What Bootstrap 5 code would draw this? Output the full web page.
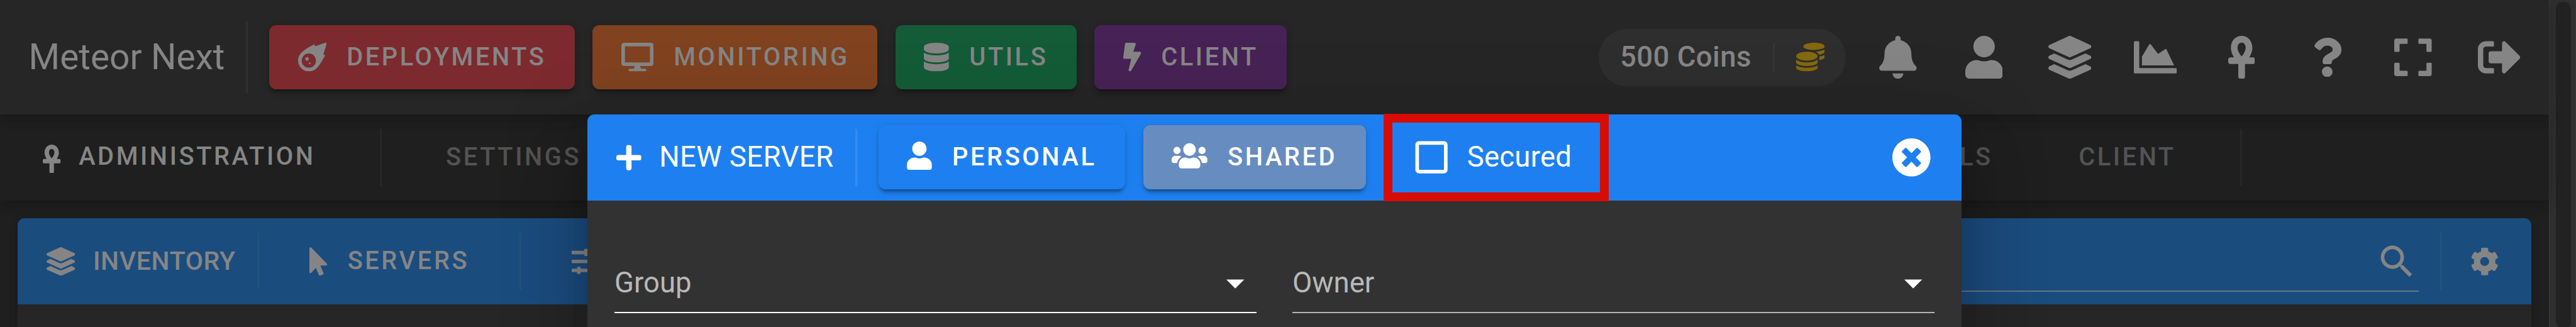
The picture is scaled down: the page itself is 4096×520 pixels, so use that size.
<!DOCTYPE html>
<html lang="en">
<head>
<meta charset="utf-8">
<title>Meteor Next</title>
<link rel="stylesheet" href="https://cdn.jsdelivr.net/npm/bootstrap@5.3.0/dist/css/bootstrap.min.css">
<script src="https://cdn.jsdelivr.net/npm/bootstrap@5.3.0/dist/js/bootstrap.bundle.min.js"></script>
<style>
/* --u is one design pixel on a 1440 wide layout */
:root{--u:calc(100vw / 1440)}
html{font-size:calc(100vw / 90)}
body{font-family:Roboto,"Liberation Sans",sans-serif;background:#1f1f1f;color:#858585;line-height:1.5;overflow:hidden;height:100vh}
.shell{height:100vh;overflow:hidden}
.page{width:calc(var(--u)*1425)}
.ic{fill:currentColor;flex:none;display:block;height:calc(var(--u)*16);width:auto}
.ic24{height:calc(var(--u)*24)}
.ic22{height:calc(var(--u)*22)}
.rule{flex:none;width:calc(var(--u)*1);background:#303030}
.topbar{height:calc(var(--u)*64);background:#262626;padding:0 calc(var(--u)*4) 0 calc(var(--u)*16);z-index:2;
 box-shadow:0 calc(var(--u)*2) calc(var(--u)*4) calc(var(--u)*-1) rgba(0,0,0,.11),0 calc(var(--u)*4) calc(var(--u)*5) rgba(0,0,0,.08),0 calc(var(--u)*1) calc(var(--u)*10) rgba(0,0,0,.07)}
.brand-name{font-size:calc(var(--u)*20);width:calc(var(--u)*121.6);white-space:nowrap}
.topbar>.rule{height:calc(var(--u)*40);margin-right:calc(var(--u)*11.9)}
.pill-btn{height:calc(var(--u)*36);padding:0 calc(var(--u)*16);border:0;border-radius:calc(var(--u)*4);font-size:calc(var(--u)*14);font-weight:500;letter-spacing:.0892857em;line-height:1;color:inherit;white-space:nowrap;
 box-shadow:0 calc(var(--u)*3) calc(var(--u)*1) calc(var(--u)*-2) rgba(0,0,0,.2),0 calc(var(--u)*2) calc(var(--u)*2) rgba(0,0,0,.14),0 calc(var(--u)*1) calc(var(--u)*5) rgba(0,0,0,.12)}
.pill-btn .ic,.srv .ic{margin-right:calc(var(--u)*11.3)}
.lbl .ic{margin-right:calc(var(--u)*10)}
.topbar .pill-btn{margin-right:calc(var(--u)*10)}
.b-deploy{background:#7c2a2e;width:calc(var(--u)*170.8)}
.b-monitor{background:#80421f;width:calc(var(--u)*159.3)}
.b-utils{background:#135c37;width:calc(var(--u)*101.2)}
.b-client{background:#472256;width:calc(var(--u)*107.4)}
.coins{height:calc(var(--u)*32);width:calc(var(--u)*138.4);border-radius:calc(var(--u)*16);background:#2e2e2e;padding:0 calc(var(--u)*12);font-size:calc(var(--u)*16);font-weight:500;letter-spacing:.01em;margin-right:calc(var(--u)*5);white-space:nowrap}
.coins .rule{height:calc(var(--u)*16);background:#363636}
.coins .ic{color:#84690f}
.tool{width:calc(var(--u)*48);height:calc(var(--u)*48)}
.subbar{height:calc(var(--u)*48);background:#1f1f1f;z-index:1;font-size:calc(var(--u)*14);font-weight:500;letter-spacing:.0892857em;
 box-shadow:0 calc(var(--u)*2) calc(var(--u)*4) calc(var(--u)*-1) rgba(0,0,0,.11),0 calc(var(--u)*4) calc(var(--u)*5) rgba(0,0,0,.08),0 calc(var(--u)*1) calc(var(--u)*10) rgba(0,0,0,.07)}
.subbar .rule,.panelbar .rule,.dlg-head .rule{height:calc(var(--u)*32)}
.subbar .rule{background:#282828}
.admin{width:calc(var(--u)*188.3);margin-left:calc(var(--u)*24);margin-top:calc(var(--u)*-1)}
.admin .ic{margin-top:calc(var(--u)*2.5)}
.tab-link{color:#535353;padding:0 calc(var(--u)*24)}
.tab-first{padding-left:calc(var(--u)*36)}
.tab-last{margin-right:calc(var(--u)*12)}
.subbar .tab-end{margin-right:calc(var(--u)*171.7)}
.panel{margin:calc(var(--u)*10) calc(var(--u)*10) 0;height:calc(var(--u)*120);background:#262626;border-radius:calc(var(--u)*4);
 box-shadow:0 calc(var(--u)*3) calc(var(--u)*1) calc(var(--u)*-2) rgba(0,0,0,.1),0 calc(var(--u)*2) calc(var(--u)*2) rgba(0,0,0,.07),0 calc(var(--u)*1) calc(var(--u)*5) rgba(0,0,0,.12)}
.panelbar{height:calc(var(--u)*48);background:#1b4c7e;border-radius:calc(var(--u)*4) calc(var(--u)*4) 0 0;padding-left:calc(var(--u)*16);font-size:calc(var(--u)*14);font-weight:500}
.panelbar .rule{background:#24527f}
.inv{width:calc(var(--u)*118);font-size:calc(var(--u)*14.4);letter-spacing:.015em}
.srv{width:calc(var(--u)*145.3);padding-left:calc(var(--u)*28);letter-spacing:.0892857em}
.panelbar .srv .ic{margin-right:calc(var(--u)*11.3)}
.before-filter{margin-right:calc(var(--u)*28.2)}
.search{width:calc(var(--u)*400);height:calc(var(--u)*33);margin-top:calc(var(--u)*1);border-bottom:calc(var(--u)*1) solid #677583}
.before-gear{margin:0 calc(var(--u)*16) 0 calc(var(--u)*12)}
.gear{margin-right:calc(var(--u)*18)}
.scroll{width:calc(var(--u)*15);background:#2f2f2f;border:solid #343434;border-width:0 calc(var(--u)*1);padding:calc(var(--u)*1) calc(var(--u)*2) 0 calc(var(--u)*3)}
.thumb{height:100vh;border-radius:calc(var(--u)*4);background:#222}
.dlg-layer{z-index:5;top:calc(var(--u)*64);left:0;width:calc(var(--u)*1425)}
.dlg{width:calc(var(--u)*768);height:calc(var(--u)*580);background:#323232;border-radius:calc(var(--u)*4);color:#fff;
 box-shadow:0 calc(var(--u)*11) calc(var(--u)*15) calc(var(--u)*-7) rgba(0,0,0,.2),0 calc(var(--u)*24) calc(var(--u)*38) calc(var(--u)*3) rgba(0,0,0,.14),0 calc(var(--u)*9) calc(var(--u)*46) calc(var(--u)*8) rgba(0,0,0,.12)}
.dlg-head{height:calc(var(--u)*48);background:#1e80f0;border-radius:calc(var(--u)*4) calc(var(--u)*4) 0 0;padding:0 calc(var(--u)*17) 0 calc(var(--u)*16);font-size:calc(var(--u)*16)}
.dlg-head .rule{background:#358df2;margin-right:calc(var(--u)*11.9)}
.newsrv{width:calc(var(--u)*133.6);white-space:nowrap;letter-spacing:.0088em}
.newsrv .ic{margin-top:calc(var(--u)*.5)}
.dlg-head .pill-btn .ic{margin-top:calc(var(--u)*-2)}
.b-personal{background:#1e80f0;width:calc(var(--u)*138);margin-right:calc(var(--u)*10)}
.b-shared{background:#678dc0;width:calc(var(--u)*124.6);margin-right:calc(var(--u)*9.7)}
.marked{width:calc(var(--u)*126);height:calc(var(--u)*48.7);margin-top:calc(var(--u)*.2);border:calc(var(--u)*5.1) solid #d90b05;padding-left:calc(var(--u)*9.9);letter-spacing:.005em;z-index:1}
.marked .ic{margin-right:calc(var(--u)*8)}
.dlg-body{padding:calc(var(--u)*30) calc(var(--u)*15);gap:calc(var(--u)*20);font-size:calc(var(--u)*16)}
.picker{width:calc(var(--u)*359);height:calc(var(--u)*33);border-bottom:calc(var(--u)*1) solid #b4b4b4;color:#b8b8b8}
.picker .ic{color:#fff}
.picker.active{border-color:#fff}
</style>
</head>
<body>
<svg class="d-none">
<symbol id="meteor" viewBox="0 0 512 512"><path fill-rule="evenodd" d="M511.328,20.8027c-11.60759,38.70264-34.30724,111.70173-61.30311,187.70077,6.99893,2.09372,13.4042,4,18.60653,5.59368a16.06158,16.06158,0,0,1,9.49854,22.906c-22.106,42.29635-82.69047,152.795-142.47819,214.40356-.99984,1.09373-1.99969,2.5-2.99954,3.49995A194.83046,194.83046,0,1,1,57.085,179.41009c.99985-1,2.40588-2,3.49947-3,61.59994-59.90549,171.97367-120.40473,214.37343-142.4982a16.058,16.058,0,0,1,22.90274,9.49988c1.59351,5.09368,3.49947,11.5936,5.5929,18.59351C379.34818,35.00565,452.43074,12.30281,491.12794.70921A16.18325,16.18325,0,0,1,511.328,20.8027ZM319.951,320.00207A127.98041,127.98041,0,1,0,191.97061,448.00046,127.97573,127.97573,0,0,0,319.951,320.00207ZM192 288a32 32 0 1 1-64 0a32 32 0 1 1 64 0ZM224 368a16 16 0 1 1-32 0a16 16 0 1 1 32 0Z"/></symbol>
<symbol id="desktop" viewBox="0 0 576 512"><path d="M528 0H48C21.5 0 0 21.5 0 48v320c0 26.5 21.5 48 48 48h192l-16 48h-72c-13.3 0-24 10.7-24 24s10.7 24 24 24h272c13.3 0 24-10.7 24-24s-10.7-24-24-24h-72l-16-48h192c26.5 0 48-21.5 48-48V48c0-26.5-21.5-48-48-48zm-16 352H64V64h448v288z"/></symbol>
<symbol id="database" viewBox="0 0 448 512"><path d="M448 73.143v45.714C448 159.143 347.667 192 224 192S0 159.143 0 118.857V73.143C0 32.857 100.333 0 224 0s224 32.857 224 73.143zM448 176v102.857C448 319.143 347.667 352 224 352S0 319.143 0 278.857V176c48.125 33.143 136.208 48.572 224 48.572S399.874 209.143 448 176zm0 160v102.857C448 479.143 347.667 512 224 512S0 479.143 0 438.857V336c48.125 33.143 136.208 48.572 224 48.572S399.874 369.143 448 336z"/></symbol>
<symbol id="bolt" viewBox="0 0 320 512"><path d="M296 160H180.6l42.6-129.8C227.2 15 215.7 0 200 0H56C44 0 33.8 8.9 32.2 20.8l-32 240C-1.7 275.2 9.5 288 24 288h118.7L96.6 482.5c-3.6 15.2 8 29.5 23.3 29.5 8.4 0 16.4-4.4 20.8-12l176-304c9.3-15.9-2.2-36-20.7-36z"/></symbol>
<symbol id="coins" viewBox="0 0 512 512"><path d="M0 405.3V448c0 35.3 86 64 192 64s192-28.7 192-64v-42.7C342.7 434.4 267.2 448 192 448S41.3 434.4 0 405.3zM320 128c106 0 192-28.7 192-64S426 0 320 0 128 28.7 128 64s86 64 192 64zM0 300.4V352c0 35.3 86 64 192 64s192-28.7 192-64v-51.6c-41.3 34-116.9 51.6-192 51.6S41.3 334.4 0 300.4zm416 11c57.3-11.1 96-31.7 96-55.4v-42.7c-23.2 16.4-57.3 27.6-96 34.5v63.6zM192 160C86 160 0 195.8 0 240s86 80 192 80 192-35.8 192-80-86-80-192-80zm219.3 56.3c60-10.8 100.7-32 100.7-56.3v-42.7c-35.5 25.1-96.5 38.6-160.7 41.8 29.5 14.3 51.2 33.5 60 57.2z"/></symbol>
<symbol id="bell" viewBox="0 0 448 512"><path d="M224 512c35.32 0 63.97-28.65 63.97-64H160.03c0 35.35 28.65 64 63.97 64zm215.39-149.71c-19.32-20.76-55.47-51.99-55.47-154.29 0-77.7-54.48-139.9-127.94-155.16V32c0-17.67-14.32-32-31.98-32s-31.98 14.33-31.98 32v20.84C118.56 68.1 64.08 130.3 64.08 208c0 102.3-36.15 133.53-55.47 154.29-6 6.45-8.66 14.16-8.61 21.71.11 16.4 12.98 32 32.1 32h383.8c19.12 0 32-15.6 32.1-32 .05-7.55-2.61-15.27-8.61-21.71z"/></symbol>
<symbol id="user" viewBox="0 0 448 512"><path d="M224 256c70.7 0 128-57.3 128-128S294.7 0 224 0 96 57.3 96 128s57.3 128 128 128zm89.6 32h-16.7c-22.2 10.2-46.9 16-72.9 16s-50.6-5.8-72.9-16h-16.7C60.2 288 0 348.2 0 422.4V464c0 26.5 21.5 48 48 48h352c26.5 0 48-21.5 48-48v-41.6c0-74.2-60.2-134.4-134.4-134.4z"/></symbol>
<symbol id="layers" viewBox="0 0 512 512"><path d="M12.41 148.02l232.94 105.67c6.8 3.09 14.49 3.09 21.29 0l232.94-105.67c16.55-7.51 16.55-32.52 0-40.03L266.65 2.31a25.607 25.607 0 0 0-21.29 0L12.41 107.98c-16.55 7.51-16.55 32.53 0 40.04zm487.18 88.28l-58.09-26.33-161.64 73.27c-7.56 3.43-15.59 5.17-23.86 5.17s-16.29-1.74-23.86-5.17L70.51 209.97l-58.1 26.33c-16.55 7.5-16.55 32.5 0 40l232.94 105.59c6.8 3.08 14.49 3.08 21.29 0L499.59 276.3c16.55-7.5 16.55-32.5 0-40zm0 127.8l-57.87-26.23-161.86 73.37c-7.56 3.43-15.59 5.17-23.86 5.17s-16.29-1.74-23.86-5.17L70.29 337.87 12.41 364.1c-16.55 7.5-16.55 32.5 0 40l232.94 105.59c6.8 3.08 14.49 3.08 21.29 0L499.59 404.1c16.55-7.5 16.55-32.5 0-40z"/></symbol>
<symbol id="chart" viewBox="0 0 512 512"><path d="M500 384c6.6 0 12 5.4 12 12v40c0 6.6-5.4 12-12 12H12c-6.6 0-12-5.4-12-12V76c0-6.6 5.4-12 12-12h40c6.6 0 12 5.4 12 12v308h436zM372.7 159.5L288 216l-85.3-113.7c-5.1-6.8-15.5-6.3-19.9 1L96 248v104h384l-89.9-187.8c-3.2-6.5-11.4-8.7-17.4-4.7z"/></symbol>
<symbol id="ankh" viewBox="0 0 320 512"><path d="M296 256h-44.62C272.46 222.01 288 181.65 288 144 288 55.63 230.69 0 160 0S32 55.63 32 144c0 37.65 15.54 78.01 36.62 112H24c-13.25 0-24 10.74-24 24v32c0 13.25 10.75 24 24 24h96v152c0 13.25 10.75 24 24 24h32c13.25 0 24-10.75 24-24V336h96c13.25 0 24-10.75 24-24v-32c0-13.26-10.75-24-24-24zM160 80c29.61 0 48 24.52 48 64 0 34.66-27.14 78.14-48 100.87-20.86-22.72-48-66.21-48-100.87 0-39.48 18.39-64 48-64z"/></symbol>
<symbol id="question" viewBox="0 0 384 512"><path d="M202.021 0C122.202 0 70.503 32.703 29.914 91.026c-7.363 10.58-5.093 25.086 5.178 32.874l43.138 32.709c10.373 7.865 25.132 6.026 33.253-4.148 25.049-31.381 43.63-49.449 82.757-49.449 30.764 0 68.816 19.799 68.816 49.631 0 22.552-18.617 34.134-48.993 51.164-35.423 19.86-82.299 44.576-82.299 106.405V320c0 13.255 10.745 24 24 24h72.471c13.255 0 24-10.745 24-24v-5.773c0-42.86 125.268-44.645 125.268-160.627C377.504 66.256 286.902 0 202.021 0zM192 373.459c-38.196 0-69.271 31.075-69.271 69.271 0 38.195 31.075 69.27 69.271 69.27s69.271-31.075 69.271-69.271-31.075-69.27-69.271-69.27z"/></symbol>
<symbol id="expand" viewBox="0 0 448 512"><path d="M0 180V56c0-13.3 10.7-24 24-24h124c6.6 0 12 5.4 12 12v40c0 6.6-5.4 12-12 12H64v84c0 6.6-5.4 12-12 12H12c-6.6 0-12-5.4-12-12zM288 44v40c0 6.6 5.4 12 12 12h84v84c0 6.6 5.4 12 12 12h40c6.6 0 12-5.4 12-12V56c0-13.3-10.7-24-24-24H300c-6.6 0-12 5.4-12 12zm148 276h-40c-6.6 0-12 5.4-12 12v84h-84c-6.6 0-12 5.4-12 12v40c0 6.6 5.4 12 12 12h124c13.3 0 24-10.7 24-24V332c0-6.6-5.4-12-12-12zM160 468v-40c0-6.6-5.4-12-12-12H64v-84c0-6.6-5.4-12-12-12H12c-6.6 0-12 5.4-12 12v124c0 13.3 10.7 24 24 24h124c6.6 0 12-5.4 12-12z"/></symbol>
<symbol id="signout" viewBox="0 0 512 512"><path d="M497 273L329 441c-15 15-41 4.5-41-17v-96H152c-13.3 0-24-10.7-24-24v-96c0-13.3 10.7-24 24-24h136V88c0-21.4 25.9-32 41-17l168 168c9.3 9.4 9.3 24.6 0 34zM192 436v-40c0-6.6-5.4-12-12-12H96c-17.7 0-32-14.3-32-32V160c0-17.7 14.3-32 32-32h84c6.6 0 12-5.4 12-12V76c0-6.6-5.4-12-12-12H96c-53 0-96 43-96 96v192c0 53 43 96 96 96h84c6.6 0 12-5.4 12-12z"/></symbol>
<symbol id="pointer" viewBox="0 0 320 512"><path d="M302.189 329.126H196.105l55.831 135.993c3.889 9.428-.555 19.999-9.444 23.999l-49.165 21.427c-9.165 4-19.443-.571-23.332-9.714l-53.053-129.136-86.664 89.138C18.729 472.71 0 463.554 0 447.977V18.299C0 1.899 19.921-6.096 30.277 5.443l284.412 292.542c11.472 11.179 3.007 31.141-12.5 31.141z"/></symbol>
<symbol id="sliders" viewBox="0 0 512 512"><path d="M496 384H160v-16c0-8.8-7.2-16-16-16h-32c-8.8 0-16 7.2-16 16v16H16c-8.8 0-16 7.2-16 16v32c0 8.8 7.2 16 16 16h80v16c0 8.8 7.2 16 16 16h32c8.8 0 16-7.2 16-16v-16h336c8.8 0 16-7.2 16-16v-32c0-8.8-7.2-16-16-16zm0-160h-80v-16c0-8.8-7.2-16-16-16h-32c-8.8 0-16 7.2-16 16v16H16c-8.8 0-16 7.2-16 16v32c0 8.8 7.2 16 16 16h336v16c0 8.8 7.2 16 16 16h32c8.8 0 16-7.2 16-16v-16h80c8.8 0 16-7.2 16-16v-32c0-8.8-7.2-16-16-16zm0-160H288V48c0-8.8-7.2-16-16-16h-32c-8.8 0-16 7.2-16 16v16H16C7.2 64 0 71.2 0 80v32c0 8.8 7.2 16 16 16h208v16c0 8.8 7.2 16 16 16h32c8.8 0 16-7.2 16-16v-16h208c8.8 0 16-7.2 16-16V80c0-8.8-7.2-16-16-16z"/></symbol>
<symbol id="plus" viewBox="0 0 448 512"><path d="M416 208H272V64c0-17.67-14.33-32-32-32h-32c-17.67 0-32 14.33-32 32v144H32c-17.67 0-32 14.33-32 32v32c0 17.67 14.33 32 32 32h144v144c0 17.67 14.33 32 32 32h32c17.67 0 32-14.33 32-32V304h144c17.67 0 32-14.33 32-32v-32c0-17.67-14.33-32-32-32z"/></symbol>
<symbol id="users" viewBox="0 0 640 512"><path d="M96 224c35.3 0 64-28.7 64-64s-28.7-64-64-64-64 28.7-64 64 28.7 64 64 64zm448 0c35.3 0 64-28.7 64-64s-28.7-64-64-64-64 28.7-64 64 28.7 64 64 64zm32 32h-64c-17.6 0-33.5 7.1-45.1 18.6 40.3 22.1 68.9 62 75.1 109.4h66c17.7 0 32-14.3 32-32v-32c0-35.3-28.7-64-64-64zm-256 0c61.9 0 112-50.1 112-112S381.9 32 320 32 208 82.1 208 144s50.1 112 112 112zm76.8 32h-8.3c-20.8 10-43.9 16-68.5 16s-47.6-6-68.5-16h-8.3C179.6 288 128 339.6 128 403.2V432c0 26.5 21.5 48 48 48h288c26.5 0 48-21.5 48-48v-28.8c0-63.6-51.6-115.2-115.2-115.2zm-223.7-13.4C161.5 263.1 145.6 256 128 256H64c-35.3 0-64 28.7-64 64v32c0 17.7 14.3 32 32 32h65.9c6.3-47.4 34.9-87.3 75.2-109.4z"/></symbol>
<symbol id="closer" viewBox="0 0 512 512"><path d="M256 8C119 8 8 119 8 256s111 248 248 248 248-111 248-248S393 8 256 8zm121.6 313.1c4.7 4.7 4.7 12.3 0 17L338 377.6c-4.7 4.7-12.3 4.7-17 0L256 312l-65.1 65.6c-4.7 4.7-12.3 4.7-17 0L134.4 338c-4.7-4.7-4.7-12.3 0-17l65.6-65-65.6-65.1c-4.7-4.7-4.7-12.3 0-17l39.6-39.6c4.7-4.7 12.3-4.7 17 0l65 65.7 65.1-65.6c4.7-4.7 12.3-4.7 17 0l39.6 39.6c4.7 4.7 4.7 12.3 0 17L312 256l65.6 65.1z"/></symbol>
<symbol id="cog" viewBox="0 0 512 512"><path d="M487.4 315.7l-42.6-24.6c4.3-23.2 4.3-47 0-70.2l42.6-24.6c4.9-2.8 7.1-8.6 5.5-14-11.1-35.6-30-67.8-54.7-94.6-3.8-4.1-10-5.1-14.8-2.3L380.8 110c-17.9-15.4-38.5-27.3-60.8-35.1V25.8c0-5.6-3.9-10.5-9.4-11.7-36.7-8.2-74.3-7.8-109.2 0-5.5 1.2-9.4 6.1-9.4 11.7V75c-22.2 7.9-42.8 19.8-60.8 35.1L88.7 85.5c-4.9-2.8-11-1.9-14.8 2.3-24.7 26.7-43.6 58.9-54.7 94.6-1.7 5.4.6 11.2 5.5 14L67.3 221c-4.3 23.2-4.3 47 0 70.2l-42.6 24.6c-4.9 2.8-7.1 8.6-5.5 14 11.1 35.6 30 67.8 54.7 94.6 3.8 4.1 10 5.1 14.8 2.3l42.6-24.6c17.9 15.4 38.5 27.3 60.8 35.1v49.2c0 5.6 3.9 10.5 9.4 11.7 36.7 8.2 74.3 7.8 109.2 0 5.5-1.2 9.4-6.1 9.4-11.7v-49.2c22.2-7.9 42.8-19.8 60.8-35.1l42.6 24.6c4.9 2.8 11 1.9 14.8-2.3 24.7-26.7 43.6-58.9 54.7-94.6 1.5-5.5-.7-11.3-5.6-14.1zM256 336c-44.1 0-80-35.9-80-80s35.9-80 80-80 80 35.9 80 80-35.9 80-80 80z"/></symbol>
<symbol id="magnify" viewBox="0 0 24 24"><path d="M9.5,3A6.5,6.5 0 0,1 16,9.5C16,11.11 15.41,12.59 14.44,13.73L14.71,14H15.5L20.5,19L19,20.5L14,15.5V14.71L13.73,14.44C12.59,15.41 11.11,16 9.5,16A6.5,6.5 0 0,1 3,9.5A6.5,6.5 0 0,1 9.5,3M9.5,5C7,5 5,7 5,9.5C5,12 7,14 9.5,14C12,14 14,12 14,9.5C14,7 12,5 9.5,5Z"/></symbol>
<symbol id="box" viewBox="0 0 24 24"><path d="M19,3H5C3.89,3 3,3.89 3,5V19A2,2 0 0,0 5,21H19A2,2 0 0,0 21,19V5C21,3.89 20.1,3 19,3M19,5V19H5V5H19Z"/></symbol>
<symbol id="down" viewBox="0 0 24 24"><path d="M7,10L12,15L17,10H7Z"/></symbol>
</svg>

<div class="shell d-flex position-relative">
  <div class="page d-flex flex-column flex-shrink-0">
    <nav class="topbar d-flex align-items-center position-relative flex-shrink-0">
      <span class="brand-name">Meteor Next</span>
      <span class="rule"></span>
      <button class="pill-btn b-deploy d-flex align-items-center"><svg class="ic" viewBox="0 0 512 512"><use href="#meteor"/></svg>DEPLOYMENTS</button>
      <button class="pill-btn b-monitor d-flex align-items-center"><svg class="ic" viewBox="0 0 576 512"><use href="#desktop"/></svg>MONITORING</button>
      <button class="pill-btn b-utils d-flex align-items-center"><svg class="ic" viewBox="0 0 448 512"><use href="#database"/></svg>UTILS</button>
      <button class="pill-btn b-client d-flex align-items-center"><svg class="ic" viewBox="0 0 320 512"><use href="#bolt"/></svg>CLIENT</button>
      <div class="coins d-flex align-items-center justify-content-between ms-auto"><span>500 Coins</span><span class="rule"></span><svg class="ic" viewBox="0 0 512 512"><use href="#coins"/></svg></div>
      <span class="tool d-flex align-items-center justify-content-center"><svg class="ic ic24" viewBox="0 0 448 512"><use href="#bell"/></svg></span>
      <span class="tool d-flex align-items-center justify-content-center"><svg class="ic ic24" viewBox="0 0 448 512"><use href="#user"/></svg></span>
      <span class="tool d-flex align-items-center justify-content-center"><svg class="ic ic24" viewBox="0 0 512 512"><use href="#layers"/></svg></span>
      <span class="tool d-flex align-items-center justify-content-center"><svg class="ic ic24" viewBox="0 0 512 512"><use href="#chart"/></svg></span>
      <span class="tool d-flex align-items-center justify-content-center"><svg class="ic ic24" viewBox="0 0 320 512"><use href="#ankh"/></svg></span>
      <span class="tool d-flex align-items-center justify-content-center"><svg class="ic ic22" viewBox="0 0 384 512"><use href="#question"/></svg></span>
      <span class="tool d-flex align-items-center justify-content-center"><svg class="ic ic24" viewBox="0 0 448 512"><use href="#expand"/></svg></span>
      <span class="tool d-flex align-items-center justify-content-center"><svg class="ic ic24" viewBox="0 0 512 512"><use href="#signout"/></svg></span>
    </nav>

    <nav class="subbar d-flex align-items-center position-relative flex-shrink-0">
      <span class="admin lbl d-flex align-items-center"><svg class="ic" viewBox="0 0 320 512"><use href="#ankh"/></svg>ADMINISTRATION</span>
      <span class="rule"></span>
      <span class="tab-link tab-first">SETTINGS</span>
      <span class="tab-link ms-auto">UTILS</span>
      <span class="tab-link tab-last">CLIENT</span>
      <span class="rule tab-end"></span>
    </nav>

    <section class="panel flex-shrink-0">
      <div class="panelbar d-flex align-items-center">
        <span class="inv lbl d-flex align-items-center"><svg class="ic" viewBox="0 0 512 512"><use href="#layers"/></svg>INVENTORY</span>
        <span class="rule"></span>
        <span class="srv lbl d-flex align-items-center"><svg class="ic" viewBox="0 0 320 512"><use href="#pointer"/></svg>SERVERS</span>
        <span class="rule before-filter"></span>
        <svg class="ic" viewBox="0 0 512 512"><use href="#sliders"/></svg>
        <div class="search d-flex justify-content-end align-items-center ms-auto"><svg class="ic ic24" viewBox="0 0 24 24"><use href="#magnify"/></svg></div>
        <span class="rule before-gear"></span>
        <svg class="ic gear" viewBox="0 0 512 512"><use href="#cog"/></svg>
      </div>
    </section>
  </div>
  <div class="scroll flex-shrink-0"><div class="thumb"></div></div>

  <div class="dlg-layer position-absolute d-flex justify-content-center">
    <div class="dlg">
      <div class="dlg-head d-flex align-items-center">
        <span class="newsrv lbl d-flex align-items-center"><svg class="ic" viewBox="0 0 448 512"><use href="#plus"/></svg>NEW SERVER</span>
        <span class="rule"></span>
        <button class="pill-btn b-personal d-flex align-items-center"><svg class="ic" viewBox="0 0 448 512"><use href="#user"/></svg>PERSONAL</button>
        <button class="pill-btn b-shared d-flex align-items-center"><svg class="ic" viewBox="0 0 640 512"><use href="#users"/></svg>SHARED</button>
        <label class="marked d-flex align-items-center"><svg class="ic ic24" viewBox="0 0 24 24"><use href="#box"/></svg>Secured</label>
        <svg class="ic ic22 ms-auto" viewBox="0 0 512 512"><use href="#closer"/></svg>
      </div>
      <div class="dlg-body d-flex">
        <div class="picker active d-flex justify-content-between align-items-center"><span>Group</span><svg class="ic ic24" viewBox="0 0 24 24"><use href="#down"/></svg></div>
        <div class="picker d-flex justify-content-between align-items-center"><span>Owner</span><svg class="ic ic24" viewBox="0 0 24 24"><use href="#down"/></svg></div>
      </div>
    </div>
  </div>
</div>
</body>
</html>
